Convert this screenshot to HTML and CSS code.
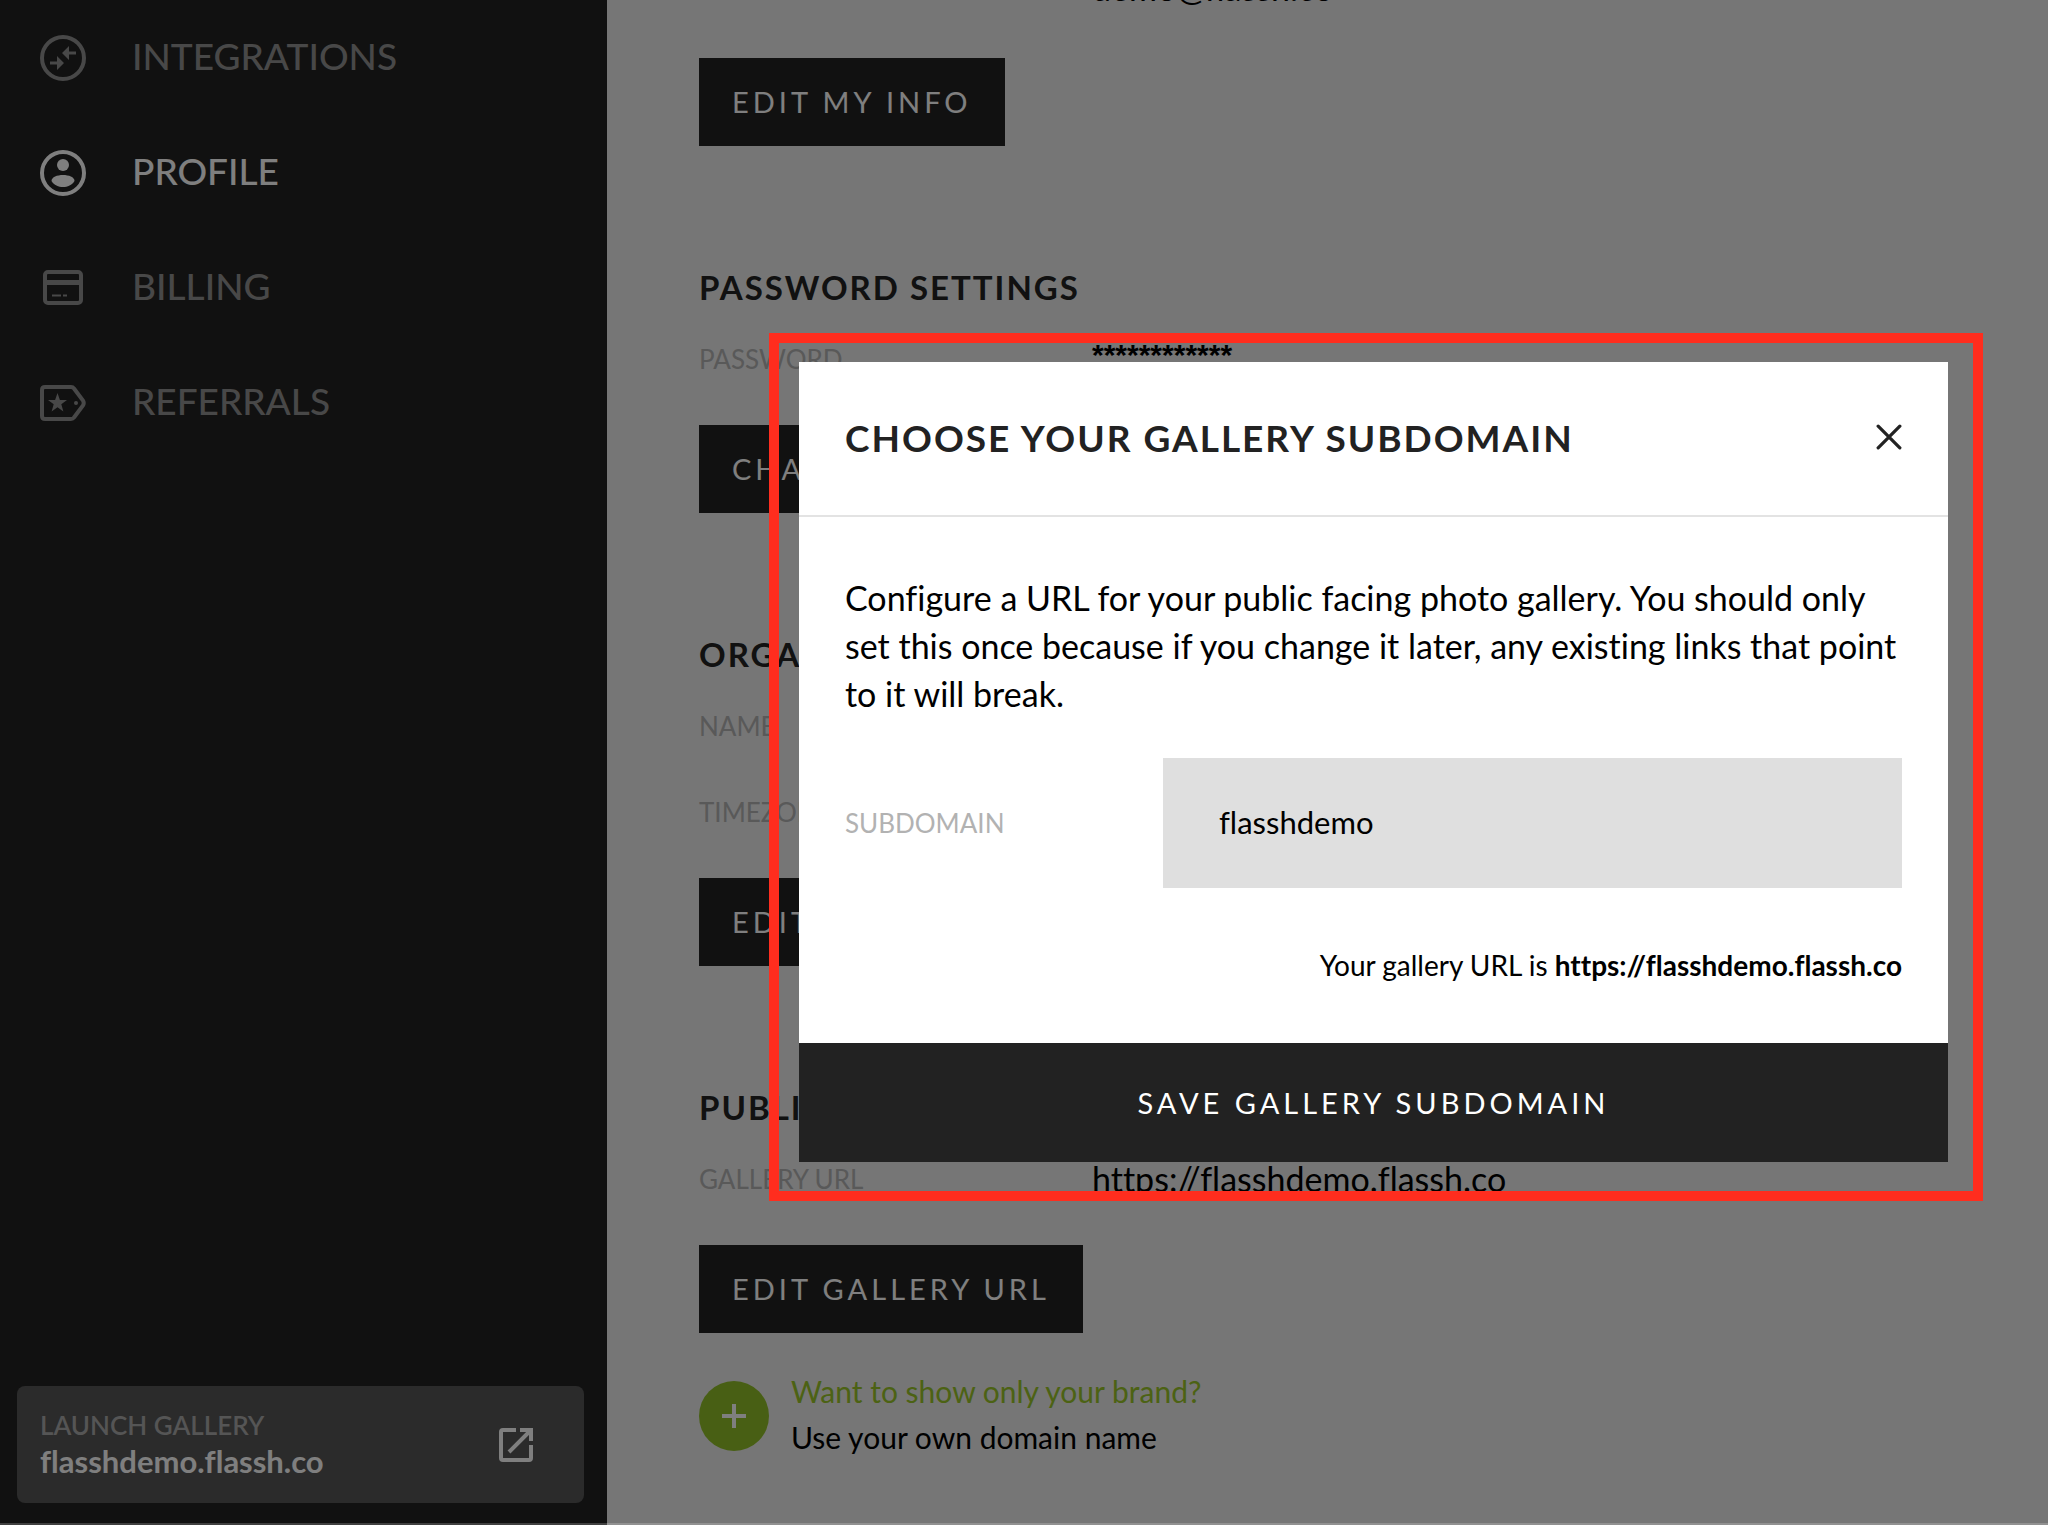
FILE: index.html
```
<!DOCTYPE html>
<html lang="en">

<head>
    <meta charset="UTF-8">
    <meta name="viewport" content="width=device-width, initial-scale=1.0">
    <title>Profile</title>
    <link rel="stylesheet" href="styles.css">
</head>

<body>
    <div class="page">
        <aside class="sidebar">
            <nav class="menu">
                <a href="#">
                    <svg viewBox="0 0 48 48" fill="none" stroke="currentColor" stroke-width="4">
                        <circle cx="24" cy="24" r="21" />
                        <path d="M11 29h8M29 19h8" stroke-width="3" />
                        <path d="M18 22l7 7-7 7zM30 12l-7 7 7 7z" fill="currentColor" stroke="none" />
                    </svg>
                    <span>INTEGRATIONS</span>
                </a>
                <a href="#" class="active">
                    <svg viewBox="0 0 48 48" fill="none" stroke="currentColor" stroke-width="4">
                        <circle cx="24" cy="24" r="21" />
                        <circle cx="24" cy="16" r="6" fill="currentColor" stroke="none" />
                        <path d="M12.500 32c0-8 23-8 23 0-5 8-18 8-23 0z" fill="currentColor" stroke="none" />
                    </svg>
                    <span>PROFILE</span>
                </a>
                <a href="#">
                    <svg viewBox="0 0 48 48" fill="none" stroke="currentColor" stroke-width="4">
                        <rect x="6" y="8" width="36" height="31" rx="3" />
                        <path d="M6 18.500h36" stroke-width="5" />
                        <path d="M13 31.500h9M24 31.500h4" stroke-width="2" />
                    </svg>
                    <span>BILLING</span>
                </a>
                <a href="#">
                    <svg viewBox="0 0 48 48" fill="none" stroke="currentColor" stroke-width="4">
                        <path d="M6 8h26q2 0 3 1.500l9 12q1.500 2.500 0 5l-9 12q-1 1.500-3 1.500H6q-3 0-3-3V11q0-3 3-3z" />
                        <path d="M18.500 14l2.400 7h7.100l-5.700 4.300 2.100 7.200-5.900-4.300-5.900 4.300 2.100-7.200L9 21h7.100z" fill="currentColor" stroke="none" />
                        <circle cx="37" cy="24" r="2" fill="currentColor" stroke="none" />
                    </svg>
                    <span>REFERRALS</span>
                </a>
            </nav>
            <a href="#" class="launch">
                <span class="launch-text">
                    <small>LAUNCH GALLERY</small>
                    <b>flasshdemo.flassh.co</b>
                </span>
                <svg viewBox="0 0 36 36" fill="none" stroke="currentColor" stroke-width="4">
                    <path d="M18 3H5Q3 3 3 5v26q0 2 2 2h26q2 0 2-2V18" />
                    <path d="M22 3h11v11M33 3L11 25" />
                </svg>
            </a>
        </aside>

        <main class="content">
            <section>
                <dl class="info">
                    <dt>EMAIL</dt>
                    <dd>demo@flassh.co</dd>
                </dl>
                <button class="btn">EDIT MY INFO</button>
            </section>
            <section>
                <h2>PASSWORD SETTINGS</h2>
                <dl>
                    <dt>PASSWORD</dt>
                    <dd class="masked">************</dd>
                </dl>
                <button class="btn">CHANGE PASSWORD</button>
            </section>
            <section>
                <h2>ORGANIZATION</h2>
                <dl>
                    <dt>NAME</dt>
                    <dd>Flassh</dd>
                    <dt>TIMEZONE</dt>
                    <dd>Pacific</dd>
                </dl>
                <button class="btn">EDIT INFO</button>
            </section>
            <section>
                <h2>PUBLIC GALLERY</h2>
                <dl>
                    <dt>GALLERY URL</dt>
                    <dd>https://flasshdemo.flassh.co</dd>
                </dl>
                <button class="btn">EDIT GALLERY URL</button>
                <div class="upsell">
                    <span class="plus">
                        <svg viewBox="0 0 24 24" stroke="currentColor" stroke-width="4">
                            <path d="M12 0v24M0 12h24" />
                        </svg>
                    </span>
                    <p><a href="#">Want to show only your brand?</a><br>Use your own domain name</p>
                </div>
            </section>
        </main>
    </div>

    <div class="overlay">
        <form class="modal" role="dialog" aria-labelledby="modal-title">
            <header>
                <h1 id="modal-title">CHOOSE YOUR GALLERY SUBDOMAIN</h1>
                <button type="button" class="close" aria-label="Close">
                    <svg viewBox="0 0 24 24" fill="none" stroke="currentColor" stroke-width="3" stroke-linecap="round">
                        <path d="M2 2l20 20M22 2L2 22" />
                    </svg>
                </button>
            </header>
            <div class="modal-body">
                <p>Configure a URL for your public facing photo gallery. You should only set this once because if you change it later, any existing links that point to it will break.</p>
                <div class="field">
                    <label for="subdomain">SUBDOMAIN</label>
                    <input type="text" id="subdomain" value="flasshdemo">
                </div>
                <div class="hint">Your gallery URL is <b>https://flasshdemo.flassh.co</b></div>
            </div>
            <button type="submit" class="save">SAVE GALLERY SUBDOMAIN</button>
        </form>
    </div>
</body>

</html>
```
FILE: styles.css
```
* {
    margin: 0;
    padding: 0;
    box-sizing: border-box;
}

body {
    font-family: Lato, "Liberation Sans", sans-serif;
    font-variant-ligatures: none;
    color: #000;
    overflow: hidden;
}

a {
    text-decoration: none;
}

button,
input {
    font: inherit;
    border: none;
    border-radius: 0;
}

.page {
    display: flex;
    height: 100vh;
    background: #ececec;
}

/* sidebar */
.sidebar {
    display: flex;
    flex-direction: column;
    justify-content: space-between;
    width: 607px;
    padding-bottom: 22px;
    background: #222;
}

.menu a {
    display: flex;
    align-items: center;
    gap: 45px;
    height: 115px;
    padding-left: 39px;
    font-size: 37px;
    font-weight: 500;
    color: #909090;
}

.menu a.active {
    color: #fff;
}

.menu span {
    padding-bottom: 4px;
}

.menu svg {
    width: 48px;
    height: 48px;
}

.launch {
    display: flex;
    align-items: center;
    justify-content: space-between;
    height: 117px;
    margin: 0 23px 0 17px;
    padding: 0 50px 0 23px;
    border-radius: 8px;
    background: #565656;
    color: #fff;
}

.launch-text {
    padding-bottom: 4px;
}

.launch small,
.launch b {
    display: block;
    line-height: 36px;
}

.launch small {
    font-size: 26px;
    font-weight: 600;
    color: #aaa;
}

.launch b {
    font-size: 31px;
}

.launch svg {
    width: 36px;
    height: 36px;
}

/* profile settings */
.content {
    display: flex;
    flex: 1;
    flex-direction: column;
    justify-content: flex-end;
    gap: 119px;
    overflow: hidden;
    padding: 0 92px 61px;
}

h2 {
    margin-bottom: 28px;
    font-size: 33px;
    line-height: 44px;
    letter-spacing: 2px;
    color: #222;
}

dl {
    display: grid;
    grid-template-columns: 393px 1fr;
    row-gap: 42px;
    margin-bottom: 44px;
    line-height: 44px;
}

.info {
    margin-bottom: 48px;
}

dt {
    font-size: 26px;
    color: #b2b2b2;
}

dd {
    font-size: 34px;
}

.masked {
    font-family: "Liberation Sans", sans-serif;
    font-size: 30px;
    font-weight: bold;
    line-height: 36px;
}

.btn {
    height: 88px;
    padding: 0 33px 2px;
    background: #222;
    color: #fff;
    font-size: 29px;
    letter-spacing: 4px;
}

.upsell {
    display: flex;
    align-items: center;
    gap: 22px;
    margin-top: 35px;
    font-size: 30px;
    line-height: 46px;
}

.upsell p {
    padding-bottom: 4px;
}

.upsell a {
    color: #98c428;
}

.plus {
    display: flex;
    align-items: center;
    justify-content: center;
    width: 70px;
    height: 70px;
    border-radius: 50%;
    background: #90be28;
    color: #fff;
}

.plus svg {
    width: 24px;
    height: 24px;
}

/* modal */
.overlay {
    position: fixed;
    inset: 0;
    display: flex;
    align-items: center;
    justify-content: flex-end;
    padding-right: 100px;
    border-bottom: 2px solid rgba(255, 255, 255, 0.2);
    background: rgba(0, 0, 0, 0.5);
}

.modal {
    position: relative;
    width: 1149px;
    background: #fff;
}

/* highlight frame */
.modal::after {
    content: "";
    position: absolute;
    inset: -29px -35px -39px -30px;
    border: 10px solid #ff2d1e;
    pointer-events: none;
}

.modal header {
    display: flex;
    align-items: center;
    justify-content: space-between;
    height: 155px;
    padding: 0 46px 2px;
    border-bottom: 2px solid #e3e3e3;
}

.modal h1 {
    font-size: 37px;
    letter-spacing: 2px;
    color: #222;
}

.close {
    width: 26px;
    height: 26px;
    background: none;
    color: #222;
}

.modal-body {
    padding: 57px 46px 54px;
}

.modal-body p {
    font-size: 34px;
    line-height: 48px;
}

.field {
    display: flex;
    align-items: center;
    justify-content: space-between;
    margin: 40px 0 53px;
}

.field label {
    font-size: 26px;
    color: #b2b2b2;
}

.field input {
    width: 739px;
    height: 130px;
    padding: 0 56px 2px;
    background: #dfdfdf;
    font-size: 31px;
}

.hint {
    font-size: 28px;
    line-height: 48px;
    text-align: right;
}

.save {
    display: block;
    width: 100%;
    height: 119px;
    background: #222;
    color: #fff;
    font-size: 29px;
    letter-spacing: 4px;
}
```
